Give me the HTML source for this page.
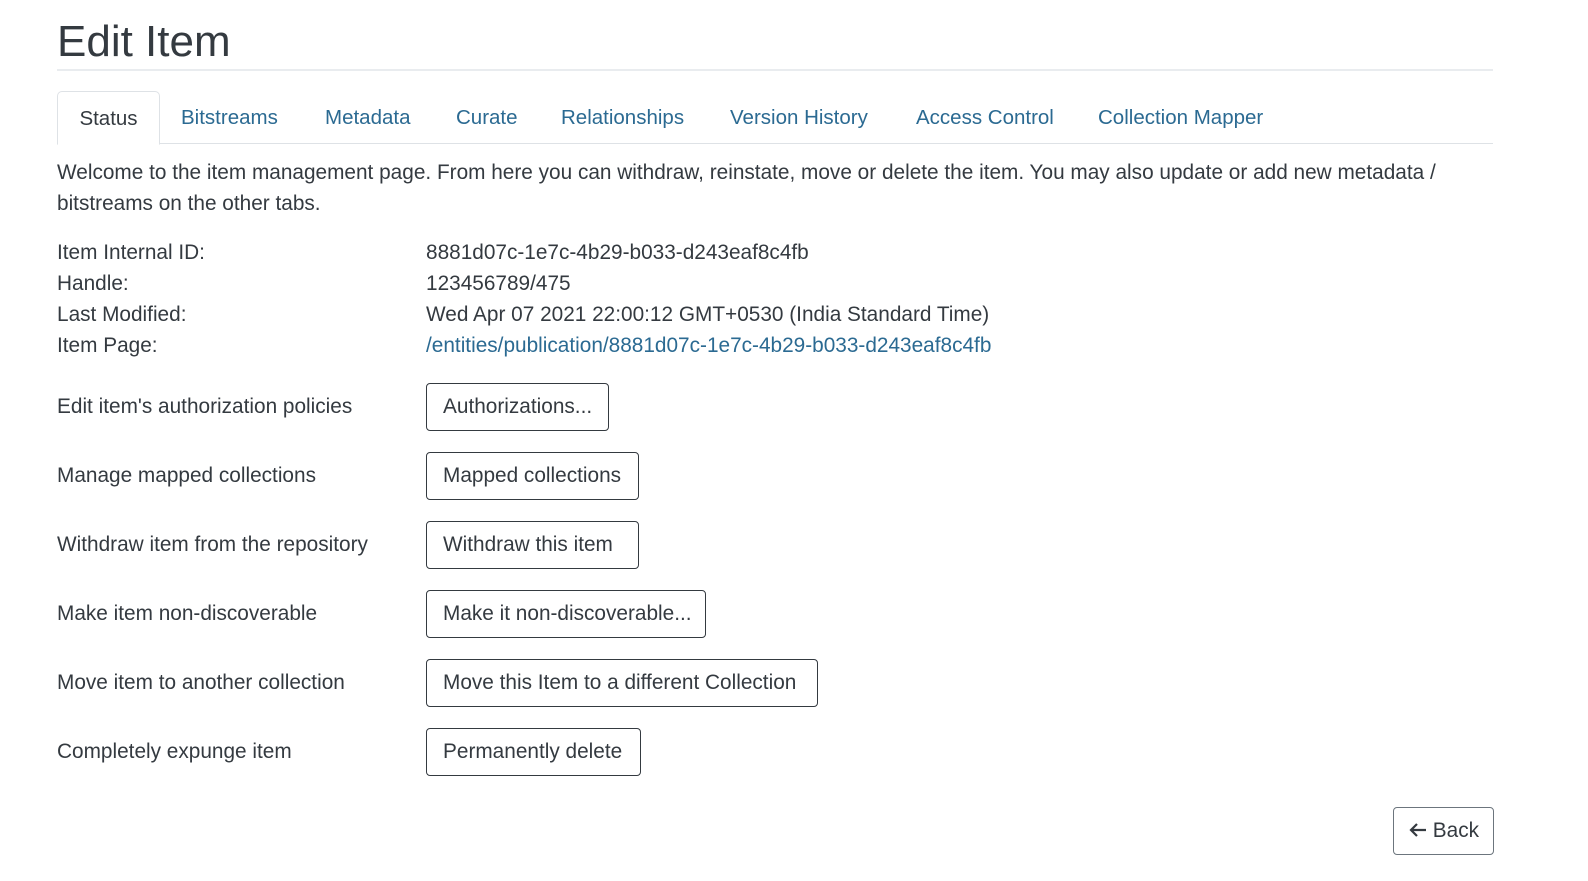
<!DOCTYPE html>
<html><head><style>
body{margin:0;background:#fff;font-family:"Liberation Sans",sans-serif;color:#343a40;width:1588px;height:881px;position:relative;overflow:hidden}
.a{position:absolute;white-space:nowrap}
h1{position:absolute;left:57px;top:17px;margin:0;font-size:44px;font-weight:400;color:#343a40}
.hr{position:absolute;left:57px;top:69px;width:1436px;height:2px;background:#e9ecef}
.tabline{position:absolute;left:57px;top:143px;width:1436px;height:1px;background:#dee2e6}
.tab{position:absolute;top:91px;height:52px;line-height:54px;font-size:20.5px;color:#2b6a92}
.act{left:57px;width:101px;border:1px solid #dee2e6;border-bottom:1px solid #fff;border-radius:5px 5px 0 0;text-align:center;color:#343a40;background:#fff}
.t{font-size:20.8px}
.btn{position:absolute;left:426px;border:1px solid #343a40;border-radius:4px;box-sizing:border-box;height:48px;line-height:46px;padding:0 16px;font-size:20.8px;color:#343a40;white-space:nowrap;overflow:hidden}
a{color:#2b6a92;text-decoration:none}
</style></head><body>
<h1>Edit Item</h1>
<div class="hr"></div>
<div class="tabline"></div>
<div class="tab act">Status</div>
<div class="tab" style="left:181px">Bitstreams</div>
<div class="tab" style="left:325px">Metadata</div>
<div class="tab" style="left:456px">Curate</div>
<div class="tab" style="left:561px">Relationships</div>
<div class="tab" style="left:730px">Version History</div>
<div class="tab" style="left:916px">Access Control</div>
<div class="tab" style="left:1098px">Collection Mapper</div>
<div class="a t" style="left:57px;top:157px;line-height:31px;white-space:normal;width:1400px">Welcome to the item management page. From here you can withdraw, reinstate, move or delete the item. You may also update or add new metadata / bitstreams on the other tabs.</div>
<div class="a t" style="left:57px;top:241px">Item Internal ID:</div>
<div class="a t" style="left:426px;top:241px">8881d07c-1e7c-4b29-b033-d243eaf8c4fb</div>
<div class="a t" style="left:57px;top:272px">Handle:</div>
<div class="a t" style="left:426px;top:272px">123456789/475</div>
<div class="a t" style="left:57px;top:303px">Last Modified:</div>
<div class="a t" style="left:426px;top:303px">Wed Apr 07 2021 22:00:12 GMT+0530 (India Standard Time)</div>
<div class="a t" style="left:57px;top:334px">Item Page:</div>
<div class="a t" style="left:426px;top:334px"><a>/entities/publication/8881d07c-1e7c-4b29-b033-d243eaf8c4fb</a></div>
<div class="a t" style="left:57px;top:395px">Edit item's authorization policies</div>
<div class="btn" style="top:383px;width:183px">Authorizations...</div>
<div class="a t" style="left:57px;top:464px">Manage mapped collections</div>
<div class="btn" style="top:452px;width:213px">Mapped collections</div>
<div class="a t" style="left:57px;top:533px">Withdraw item from the repository</div>
<div class="btn" style="top:521px;width:213px">Withdraw this item</div>
<div class="a t" style="left:57px;top:602px">Make item non-discoverable</div>
<div class="btn" style="top:590px;width:280px">Make it non-discoverable...</div>
<div class="a t" style="left:57px;top:671px">Move item to another collection</div>
<div class="btn" style="top:659px;width:392px">Move this Item to a different Collection</div>
<div class="a t" style="left:57px;top:740px">Completely expunge item</div>
<div class="btn" style="top:728px;width:215px">Permanently delete</div>
<div class="btn" style="left:1393px;top:807px;width:101px;border-color:#6c757d;padding:0 0 0 15px"><svg width="18" height="16" viewBox="0 0 18 16" style="vertical-align:-1px"><path d="M17 8H2M8 2L2 8l6 6" stroke="#343a40" stroke-width="2.2" fill="none"/></svg> Back</div>
</body></html>
